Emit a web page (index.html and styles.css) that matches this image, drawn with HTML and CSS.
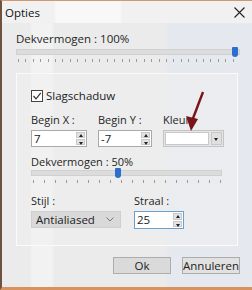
FILE: index.html
```html
<!DOCTYPE html>
<html lang="nl">
  <head>
    <meta charset="UTF-8" />
    <title>Opties</title>
    <link rel="stylesheet" href="styles.css">
  </head>
  <body>
    <div class="window">
      <div class="titlebar">
        <span class="title">Opties</span>
        <svg class="close" width="11" height="11" viewBox="0 0 11 11"><path d="M0.5 0.5 L10.5 10.5 M10.5 0.5 L0.5 10.5" stroke="#222" stroke-width="1.1"/></svg>
      </div>
      <div class="content">
        <div class="label">Dekvermogen : 100%</div>
        <div class="slider wide">
          <div class="track"><span class="thumb" style="left: 97%"></span></div>
          <div class="ticks"></div>
        </div>

        <div class="group">
          <label class="check">
            <span class="box">
              <svg width="10" height="10" viewBox="0 0 10 10"><path d="M1.5 5 L4 7.8 L8.8 1.8" fill="none" stroke="#333" stroke-width="1.2"/></svg>
            </span>
            Slagschaduw
          </label>

          <div class="row fields">
            <div class="field">
              <div class="label">Begin X :</div>
              <div class="spin x"><span class="val">7</span><span class="btns"><i class="up"></i><i class="down"></i></span></div>
            </div>
            <div class="field">
              <div class="label">Begin Y :</div>
              <div class="spin y"><span class="val">-7</span><span class="btns"><i class="up"></i><i class="down"></i></span></div>
            </div>
            <div class="field colour">
              <div class="label">Kleur :</div>
              <div class="colorbox"><span class="swatch"></span><span class="drop"><i class="down"></i></span></div>
              <svg class="arrow" width="24" height="42" viewBox="0 0 24 42"><path d="M19 1 L8 30" stroke="#7b1418" stroke-width="2.4"/><path d="M2 25 L7 40 L14 28 Z" fill="#7b1418"/></svg>
            </div>
          </div>

          <div class="label">Dekvermogen : 50%</div>
          <div class="slider">
            <div class="track"><span class="thumb" style="left: 44%"></span></div>
            <div class="ticks small"></div>
          </div>

          <div class="row bottom">
            <div class="field">
              <div class="label">Stijl :</div>
              <div class="select">Antialiased
                <svg width="8" height="5" viewBox="0 0 8 5"><path d="M0.5 0.5 L4 4 L7.5 0.5" fill="none" stroke="#777" stroke-width="1"/></svg>
              </div>
            </div>
            <div class="field">
              <div class="label">Straal :</div>
              <div class="spin straal"><span class="val">25</span><span class="btns"><i class="up"></i><i class="down"></i></span></div>
            </div>
          </div>
        </div>

        <div class="buttons">
          <button class="btn ok">Ok</button>
          <button class="btn">Annuleren</button>
        </div>
      </div>
    </div>
  </body>
</html>
```

FILE: styles.css
```css
* {
  margin: 0;
  padding: 0;
  box-sizing: border-box;
}
body {
  width: 252px;
  height: 290px;
  overflow: hidden;
  font-family: "Open Sans", "Noto Sans", sans-serif;
  font-size: 11px;
  color: #222;
}

/* venster met oranje rand */
.window {
  position: relative;
  height: 290px;
  border-top: 1px solid #d29a6c;
  border-left: 2px solid #6f5140;
  border-bottom: 3px solid #d8925e;
  background:
    linear-gradient(90deg, transparent 28px, rgba(255,255,255,0.35) 30px, rgba(255,255,255,0.35) 50px, transparent 52px),
    linear-gradient(90deg, transparent 163px, rgba(225,232,242,0.55) 165px),
    #ebebeb;
}

.titlebar {
  height: 22px;
  display: flex;
  align-items: center;
  justify-content: space-between;
  padding: 0 7px 0 3px;
  background:
    linear-gradient(90deg, transparent 52px, rgba(255,255,255,0.5) 54px, rgba(255,255,255,0.5) 118px, transparent 120px),
    #f1f1f1;
}
.title {
  font-size: 11.5px;
  color: #111;
}

.content {
  padding: 9px 12px 0 14px;
}
.label {
  line-height: 14px;
  color: #1f1f1f;
}
.content > .label {
  font-size: 11.5px;
}

/* schuifregelaar */
.slider {
  margin-top: 3px;
}
.group .slider {
  margin-top: 1px;
}
.track {
  position: relative;
  height: 6px;
  background: #dcdcdc;
  border: 1px solid #d0d0d0;
}
.thumb {
  position: absolute;
  top: -3px;
  width: 6px;
  height: 10px;
  background: #2a6ed0;
  border-radius: 1px 1px 3px 3px;
}
.ticks {
  height: 3px;
  margin: 4px 1px 0 2px;
  background: repeating-linear-gradient(90deg, #9a9a9a 0 1px, transparent 1px 7.4px);
}
.ticks.small {
  background: repeating-linear-gradient(90deg, #9a9a9a 0 1px, transparent 1px 11px);
}

/* groepvak */
.group {
  margin-top: 11px;
  height: 173px;
  width: 222px;
  border: 1px solid #fafafa;
  background: rgba(240,240,240,0.5);
  padding: 14px 15px 0 14px;
}
.check {
  display: flex;
  align-items: center;
  gap: 3px;
  font-size: 11.5px;
}
.box {
  width: 12px;
  height: 12px;
  border: 1px solid #444;
  background: #fff;
  display: flex;
  align-items: center;
  justify-content: center;
}

.row {
  display: flex;
}
.fields {
  margin-top: 10px;
  gap: 11px;
}
.field {
  display: flex;
  flex-direction: column;
  gap: 3px;
}
.colour {
  position: relative;
}
.arrow {
  position: absolute;
  left: 21px;
  top: -22px;
}

.spin {
  display: flex;
  height: 17px;
  border: 1px solid #a9a9a9;
  background: #fff;
  padding: 1px;
}
.spin .val {
  flex: 1;
  line-height: 14px;
  padding-left: 1px;
  font-size: 11.5px;
}
.spin.x { width: 56px; }
.spin.y { width: 54px; }
.btns {
  width: 9px;
  display: flex;
  flex-direction: column;
  gap: 1px;
}
.btns i {
  flex: 1;
  background: #e2e2e2;
  border: 1px solid #c8c8c8;
  position: relative;
}
.btns i::after,
.drop i::after {
  content: "";
  position: absolute;
  left: 2px;
  border-left: 2px solid transparent;
  border-right: 2px solid transparent;
}
.btns .up::after {
  top: 1px;
  border-bottom: 3px solid #222;
}
.btns .down::after {
  top: 2px;
  border-top: 3px solid #222;
}

.colorbox {
  display: flex;
  width: 61px;
  height: 17px;
  border: 1px solid #c4c4c4;
  background: #e6e6e6;
  padding: 1px;
  gap: 2px;
}
.swatch {
  flex: 1;
  background: #fff;
  border: 1px solid #c8c8c8;
}
.drop {
  width: 11px;
  background: #e0e0e0;
  border: 1px solid #c8c8c8;
}
.drop i {
  display: block;
  position: relative;
  top: 5px;
}
.drop i::after {
  left: 2px;
  border-top: 3px solid #222;
}

.group > .label {
  margin-top: 8px;
}

.bottom {
  margin-top: 11px;
  gap: 13px;
}
.select {
  width: 90px;
  height: 17px;
  background: #d9d9d9;
  border: 1px solid #cfcfcf;
  display: flex;
  align-items: center;
  justify-content: space-between;
  padding: 0 6px 0 4px;
  font-size: 11.5px;
}
.spin.straal {
  width: 50px;
  height: 18px;
  border-color: #6ba0cc;
}

.buttons {
  display: flex;
  justify-content: flex-end;
  gap: 11px;
  margin-top: 11px;
}
.btn {
  width: 58px;
  height: 17px;
  font-family: inherit;
  font-size: 11.5px;
  color: #222;
  background: #e1e1e1;
  border: 1px solid #adadad;
}
.btn.ok {
  background: #dadada;
}
```
